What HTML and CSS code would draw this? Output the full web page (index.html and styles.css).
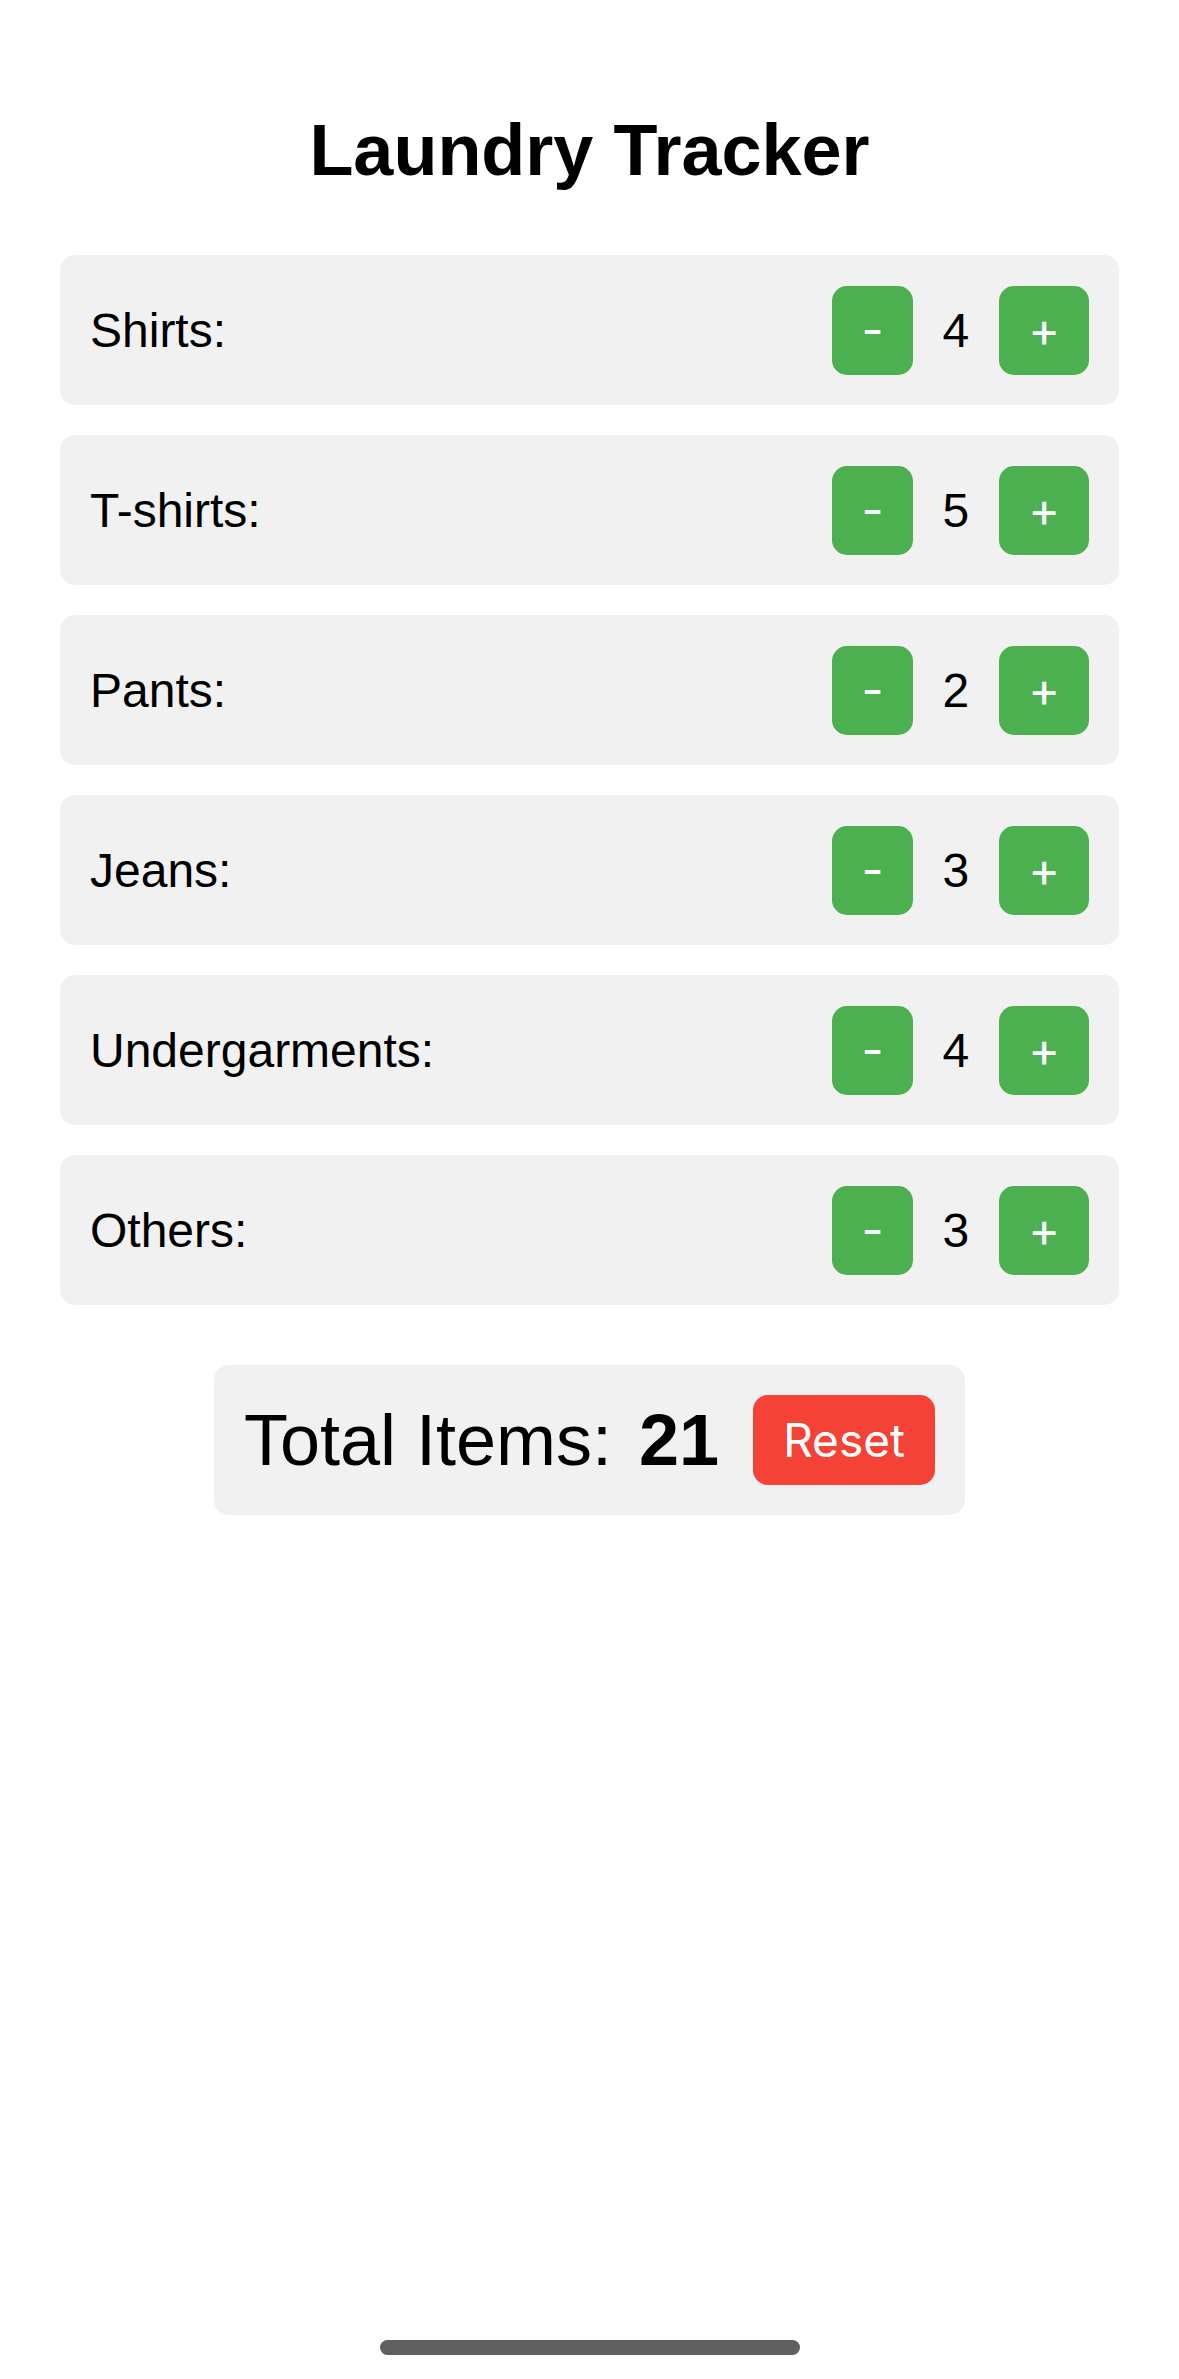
FILE: index.html
```html
<!DOCTYPE html>
<html lang="en">
<head>
<meta charset="utf-8">
<title>Laundry Tracker</title>
<link rel="stylesheet" href="styles.css">
</head>
<body>
<div class="app">
  <h1 class="title">Laundry Tracker</h1>
  <div class="list">
    <div class="item"><span class="label">Shirts:</span><div class="controls"><button class="btn">-</button><span class="count">4</span><button class="btn">+</button></div></div>
    <div class="item"><span class="label">T-shirts:</span><div class="controls"><button class="btn">-</button><span class="count">5</span><button class="btn">+</button></div></div>
    <div class="item"><span class="label">Pants:</span><div class="controls"><button class="btn">-</button><span class="count">2</span><button class="btn">+</button></div></div>
    <div class="item"><span class="label">Jeans:</span><div class="controls"><button class="btn">-</button><span class="count">3</span><button class="btn">+</button></div></div>
    <div class="item"><span class="label">Undergarments:</span><div class="controls"><button class="btn">-</button><span class="count">4</span><button class="btn">+</button></div></div>
    <div class="item"><span class="label">Others:</span><div class="controls"><button class="btn">-</button><span class="count">3</span><button class="btn">+</button></div></div>
  </div>
  <div class="total-wrap">
    <div class="total">
      <span class="total-text">Total Items: <strong>21</strong></span>
      <button class="reset">Reset</button>
    </div>
  </div>
</div>
<div class="home-indicator"></div>
</body>
</html>
```
FILE: styles.css
```css
html, body {
  margin: 0;
  padding: 0;
  background: #ffffff;
}
body {
  font-family: "Liberation Sans", Arial, sans-serif;
  color: #000;
  min-height: 2379px;
  position: relative;
}
.app {
  padding: 0 60px;
}
.title {
  margin: 0 0 65px;
  padding-top: 110px;
  font-size: 72px;
  line-height: 80px;
  font-weight: bold;
  text-align: center;
}
.list {
  display: flex;
  flex-direction: column;
  gap: 30px;
}
.item {
  display: flex;
  align-items: center;
  justify-content: space-between;
  background: #f1f1f1;
  border-radius: 15px;
  padding: 0 30px;
  height: 150px;
  box-sizing: border-box;
}
.label {
  font-size: 48px;
}
.controls {
  display: flex;
  align-items: center;
}
.btn {
  background: #4caf50;
  color: #fff;
  border: none;
  border-radius: 15px;
  height: 89px;
  padding: 0 29px;
  font-family: Inter, "Noto Sans", sans-serif;
  font-size: 48px;
  line-height: 1;
}
.count {
  font-size: 48px;
  margin: 0 30px;
}
.total-wrap {
  display: flex;
  justify-content: center;
  margin-top: 60px;
}
.total {
  display: flex;
  align-items: center;
  background: #f1f1f1;
  border-radius: 15px;
  padding: 30px;
}
.total-text {
  font-size: 72px;
}
.total-text strong {
  font-weight: bold;
  margin-left: 7px;
}
.reset {
  margin-left: 34px;
  background: #f44336;
  color: #fff;
  border: none;
  border-radius: 15px;
  height: 90px;
  padding: 0 30px;
  font-family: Inter, "Noto Sans", sans-serif;
  font-size: 46px;
  line-height: 1;
}
.home-indicator {
  position: absolute;
  left: 380px;
  top: 2340px;
  width: 420px;
  height: 15px;
  border-radius: 8px;
  background: #606060;
}
```
